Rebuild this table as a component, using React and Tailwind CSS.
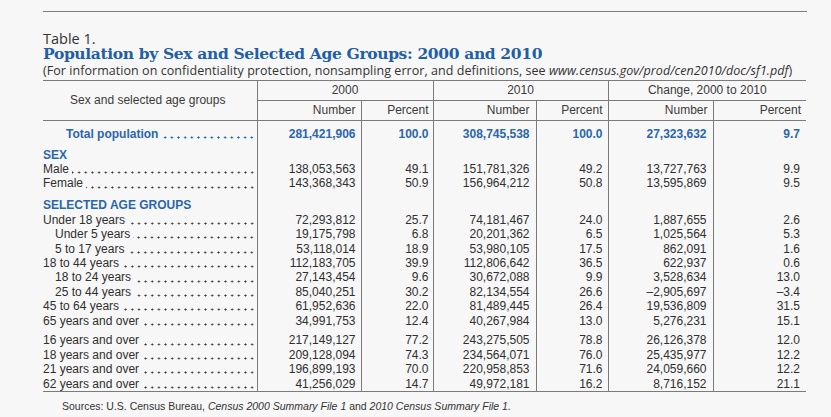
import React from "react";

const BLUE = "text-[#2a66ad]";

const sexRows = [
  ["Male", 0, "138,053,563", "49.1", "151,781,326", "49.2", "13,727,763", "9.9"],
  ["Female", 0, "143,368,343", "50.9", "156,964,212", "50.8", "13,595,869", "9.5"],
];

const ageRows1 = [
  ["Under 18 years", 0, "72,293,812", "25.7", "74,181,467", "24.0", "1,887,655", "2.6"],
  ["Under 5 years", 1, "19,175,798", "6.8", "20,201,362", "6.5", "1,025,564", "5.3"],
  ["5 to 17 years", 1, "53,118,014", "18.9", "53,980,105", "17.5", "862,091", "1.6"],
  ["18 to 44 years", 0, "112,183,705", "39.9", "112,806,642", "36.5", "622,937", "0.6"],
  ["18 to 24 years", 1, "27,143,454", "9.6", "30,672,088", "9.9", "3,528,634", "13.0"],
  ["25 to 44 years", 1, "85,040,251", "30.2", "82,134,554", "26.6", "\u20132,905,697", "\u20133.4"],
  ["45 to 64 years", 0, "61,952,636", "22.0", "81,489,445", "26.4", "19,536,809", "31.5"],
  ["65 years and over", 0, "34,991,753", "12.4", "40,267,984", "13.0", "5,276,231", "15.1"],
];

const ageRows2 = [
  ["16 years and over", 0, "217,149,127", "77.2", "243,275,505", "78.8", "26,126,378", "12.0"],
  ["18 years and over", 0, "209,128,094", "74.3", "234,564,071", "76.0", "25,435,977", "12.2"],
  ["21 years and over", 0, "196,899,193", "70.0", "220,958,853", "71.6", "24,059,660", "12.2"],
  ["62 years and over", 0, "41,256,029", "14.7", "49,972,181", "16.2", "8,716,152", "21.1"],
];

function Leader({ label, indent, bold }) {
  const pad = indent === 2 ? "pl-[23px]" : indent === 1 ? "pl-[12px]" : "";
  const dots = bold
    ? "bg-[radial-gradient(circle,#2a66ad_0.9px,transparent_1.25px)]"
    : "bg-[radial-gradient(circle,#3a3a3a_0.85px,transparent_1.2px)]";
  return (
    <div className={"flex whitespace-nowrap pr-[1px] " + pad}>
      <span className={bold ? "font-bold " + BLUE : ""}>{label}</span>
      <span
        className={
          "flex-1 ml-[3px] h-[3px] self-end mb-[2.2px] bg-repeat-x bg-[length:6.67px_3px] bg-[position:right_center] " +
          dots
        }
      ></span>
    </div>
  );
}

const numCls = [
  "text-right pr-[5px] border-r border-[#7a7a7a]",
  "text-right pr-[4px] border-r border-[#7a7a7a]",
  "text-right pr-[6px] border-r border-[#7a7a7a]",
  "text-right pr-[5px] border-r border-[#7a7a7a]",
  "text-right pr-[6px] border-r border-[#7a7a7a]",
  "text-right pr-[6px]",
];

function DataRow({ r }) {
  return (
    <tr className="h-[14.4px]">
      <td className="p-0 border-r border-[#7a7a7a]">
        <Leader label={r[0]} indent={r[1]} />
      </td>
      {r.slice(2).map((v, i) => (
        <td key={i} className={"p-0 " + numCls[i]}>{v}</td>
      ))}
    </tr>
  );
}

function SpacerRow({ h }) {
  return (
    <tr className={h}>
      <td className="p-0 border-r border-[#7a7a7a]"></td>
      {numCls.map((c, i) => (
        <td key={i} className={"p-0 " + c}></td>
      ))}
    </tr>
  );
}

function HeadRow({ label }) {
  return (
    <tr className="h-[14.4px]">
      <td className={"p-0 border-r border-[#7a7a7a] font-bold " + BLUE}>{label}</td>
      {numCls.map((c, i) => (
        <td key={i} className={"p-0 " + c}></td>
      ))}
    </tr>
  );
}

export default function App() {
  const total = ["281,421,906", "100.0", "308,745,538", "100.0", "27,323,632", "9.7"];
  return (
    <div className="w-[831px] h-[417px] bg-[#f7f7f7] overflow-hidden pt-[11px]">
      <div className="ml-[43px] w-[764px]">
        <div className="border-t border-[#7d7d7d]"></div>
        <div className="mt-[20px] font-['Open_Sans',sans-serif] text-[14.5px] leading-[14px] text-[#333]">Table 1.</div>
        <div className="font-['DejaVu_Serif',serif] font-bold text-[15.5px] leading-[15px] text-[#1f5ea8] tracking-[-0.35px]">
          Population by Sex and Selected Age Groups: 2000 and 2010
        </div>
        <div className="mt-[3px] font-['Open_Sans',sans-serif] text-[12.5px] leading-[14px] text-[#333] whitespace-nowrap tracking-[0.05px]">
          (For information on confidentiality protection, nonsampling error, and definitions, see{" "}
          <span className="italic">www.census.gov/prod/cen2010/doc/sf1.pdf</span>)
        </div>
        <table className="mt-[2px] table-fixed border-collapse w-[763px] font-['Liberation_Sans',Arial,sans-serif] text-[12px] leading-[14.4px] text-[#2f2f2f]">
          <colgroup>
            <col className="w-[214px]" />
            <col className="w-[104px]" />
            <col className="w-[72px]" />
            <col className="w-[103px]" />
            <col className="w-[72px]" />
            <col className="w-[105px]" />
            <col className="w-[93px]" />
          </colgroup>
          <thead className="text-[#3a3a3a]">
            <tr className="h-[20px] border-t border-[#7a7a7a]">
              <th rowSpan={2} className="p-0 font-normal text-center border-r border-b border-[#7a7a7a] pr-[4px]">
                Sex and selected age groups
              </th>
              <th colSpan={2} className="p-0 font-normal text-center border-r border-b border-[#7a7a7a]">2000</th>
              <th colSpan={2} className="p-0 font-normal text-center border-r border-b border-[#7a7a7a]">2010</th>
              <th colSpan={2} className="p-0 font-normal text-center border-b border-[#7a7a7a]">Change, 2000 to 2010</th>
            </tr>
            <tr className="h-[20px] border-b border-[#7a7a7a]">
              <th className="p-0 font-normal text-right pr-[5px] border-r border-[#7a7a7a]">Number</th>
              <th className="p-0 font-normal text-right pr-[4px] border-r border-[#7a7a7a]">Percent</th>
              <th className="p-0 font-normal text-right pr-[6px] border-r border-[#7a7a7a]">Number</th>
              <th className="p-0 font-normal text-right pr-[5px] border-r border-[#7a7a7a]">Percent</th>
              <th className="p-0 font-normal text-right pr-[5px] border-r border-[#7a7a7a]">Number</th>
              <th className="p-0 font-normal text-right pr-[5px]">Percent</th>
            </tr>
          </thead>
          <tbody className="border-b border-[#7a7a7a]">
            <tr className="h-[27px]">
              <td className="p-0 border-r border-[#7a7a7a]">
                <Leader label="Total population" indent={2} bold />
              </td>
              {total.map((v, i) => (
                <td key={i} className={"p-0 font-bold " + BLUE + " " + numCls[i]}>{v}</td>
              ))}
            </tr>
            <HeadRow label="SEX" />
            {sexRows.map((r, i) => <DataRow key={i} r={r} />)}
            <SpacerRow h="h-[7.7px]" />
            <HeadRow label="SELECTED AGE GROUPS" />
            {ageRows1.map((r, i) => <DataRow key={i} r={r} />)}
            <SpacerRow h="h-[5.4px]" />
            {ageRows2.map((r, i) => <DataRow key={i} r={r} />)}
          </tbody>
        </table>
        <div className="mt-[8px] pl-[19px] font-['Liberation_Sans',Arial,sans-serif] text-[10.5px] leading-[12px] text-[#333]">
          Sources: U.S. Census Bureau, <span className="italic">Census 2000 Summary File 1</span> and{" "}
          <span className="italic">2010 Census Summary File 1.</span>
        </div>
      </div>
    </div>
  );
}
